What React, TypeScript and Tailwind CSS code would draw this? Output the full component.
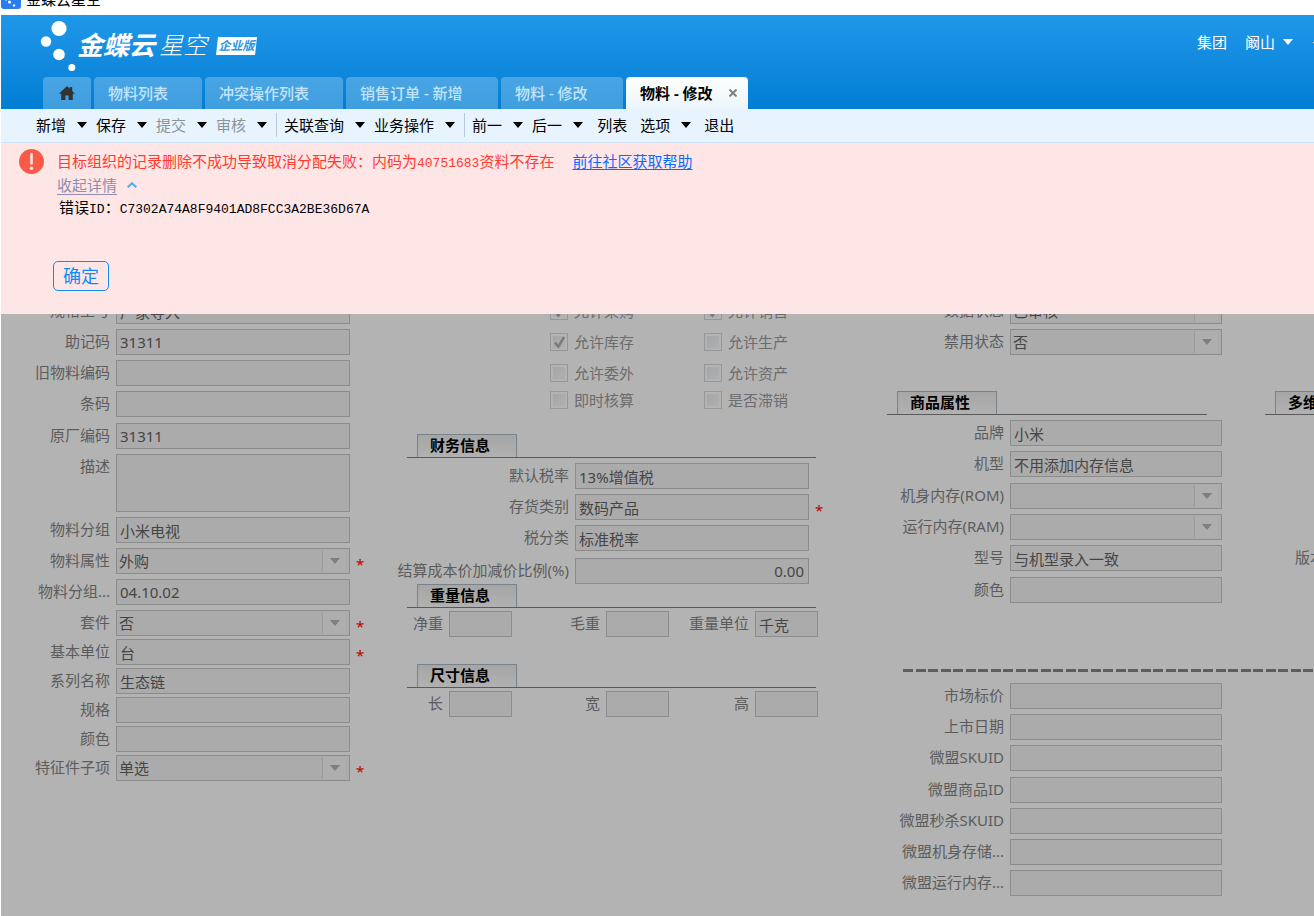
import { useId, type ReactNode } from 'react'
import clsx from 'clsx'

interface FieldData {
  label: string
  value?: string
  kind?: 'text' | 'select' | 'area'
  required?: boolean
  align?: 'right'
}

// Left column, split where the spacing between rows changes
const BASIC_GROUPS: FieldData[][] = [
  [
    { label: '规格型号', value: '厂家导入' },
    { label: '助记码', value: '31311' },
    { label: '旧物料编码' },
    { label: '条码' },
  ],
  [
    { label: '原厂编码', value: '31311' },
    { label: '描述', kind: 'area' },
    { label: '物料分组', value: '小米电视' },
    { label: '物料属性', value: '外购', kind: 'select', required: true },
    { label: '物料分组...', value: '04.10.02' },
    { label: '套件', value: '否', kind: 'select', required: true },
  ],
]

const UNIT_FIELDS: FieldData[] = [
  { label: '基本单位', value: '台', required: true },
  { label: '系列名称', value: '生态链' },
  { label: '规格' },
  { label: '颜色' },
  { label: '特征件子项', value: '单选', kind: 'select', required: true },
]

const TAX_FIELDS: FieldData[] = [
  { label: '默认税率', value: '13%增值税' },
  { label: '存货类别', value: '数码产品', required: true },
  { label: '税分类', value: '标准税率' },
]

const STATUS_FIELDS: FieldData[] = [
  { label: '数据状态', value: '已审核', kind: 'select' },
  { label: '禁用状态', value: '否', kind: 'select' },
]

const GOODS_GROUPS: FieldData[][] = [
  [
    { label: '品牌', value: '小米' },
    { label: '机型', value: '不用添加内存信息' },
  ],
  [
    { label: '机身内存(ROM)', kind: 'select' },
    { label: '运行内存(RAM)', kind: 'select' },
    { label: '型号', value: '与机型录入一致' },
  ],
  [{ label: '颜色' }],
]

const MARKET_GROUPS: FieldData[][] = [
  [{ label: '市场标价' }, { label: '上市日期' }, { label: '微盟SKUID' }],
  [
    { label: '微盟商品ID' },
    { label: '微盟秒杀SKUID' },
    { label: '微盟机身存储...' },
    { label: '微盟运行内存...' },
  ],
]

const TABS = [
  { title: '物料列表', width: 'w-[108px]' },
  { title: '冲突操作列表', width: 'w-[138px]' },
  { title: '销售订单 - 新增', width: 'w-[152px]' },
  { title: '物料 - 修改', width: 'w-[122px]' },
]

function Caret({ className }: { className?: string }) {
  return (
    <svg className={clsx('shrink-0 fill-current', className)} width="10" height="6" viewBox="0 0 10 6">
      <path d="M0 0h10L5 6z" />
    </svg>
  )
}

const CONTROL =
  'w-full border border-[#8c8c8c] bg-[#ababab] text-[15px] leading-[22px] text-[#454545] opacity-100'

function Field({ label, value = '', kind = 'text', required, align, labelWidth, width }: FieldData & {
  labelWidth: string
  width: string
}) {
  const id = useId()
  return (
    <div className="flex shrink-0">
      <label htmlFor={id} className={clsx('mr-1.5 shrink-0 whitespace-nowrap text-right leading-6 text-[#5c5c5c]', labelWidth)}>
        {label}
      </label>
      <div className={clsx('relative shrink-0', width)}>
        {kind === 'area' && (
          <textarea id={id} disabled defaultValue={value} className={clsx(CONTROL, 'block h-[58px] resize-none px-[3px]')} />
        )}
        {kind === 'text' && (
          <input
            id={id}
            disabled
            defaultValue={value}
            className={clsx(CONTROL, 'block h-[26px] px-[3px]', align === 'right' && 'pr-1 text-right')}
          />
        )}
        {kind === 'select' && (
          <>
            <select id={id} disabled defaultValue={value} className={clsx(CONTROL, 'block h-[26px] appearance-none px-0.5')}>
              <option value={value}>{value}</option>
            </select>
            <span className="pointer-events-none absolute top-0.5 right-1 flex h-[22px] w-6 items-center justify-center border-l border-[#9c9c9c] bg-[#aeaeae] text-[#7f7f7f]">
              <Caret />
            </span>
          </>
        )}
      </div>
      {required && <span className="ml-1.5 h-[26px] leading-8 text-[#bd0000]">*</span>}
    </div>
  )
}

function FieldList({ fields, labelWidth, width }: { fields: FieldData[]; labelWidth: string; width: string }) {
  return (
    <div className="flex flex-col gap-[5px]">
      {fields.map((f) => (
        <Field key={f.label} {...f} labelWidth={labelWidth} width={width} />
      ))}
    </div>
  )
}

function SectionTitle({ children, className }: { children: ReactNode; className?: string }) {
  return (
    <div className={clsx('border-b border-[#5a5a5a] pl-2.5', className)}>
      <h2 className="h-[23px] w-[100px] border border-b-0 border-[#78828b] bg-linear-to-b from-[#a6a6a6] to-[#b1b1b1] pl-3 text-[15px] leading-5 font-bold whitespace-nowrap text-black">
        {children}
      </h2>
    </div>
  )
}

function CheckItem({ label, checked }: { label: string; checked?: boolean }) {
  return (
    <label className="flex h-[18px] w-[154px] items-center gap-1.5 text-[#6c6c6c]">
      <span className="relative size-[18px]">
        <input
          type="checkbox"
          disabled
          defaultChecked={checked}
          className="block size-[18px] appearance-none border border-[#979797] bg-linear-to-br from-[#a2a5a8] to-[#b1b1b1] bg-clip-content p-0.5"
        />
        {checked && (
          <svg className="absolute top-0.5 left-1" width="12" height="14" viewBox="0 0 12 14">
            <path d="M1 7.5l3.4 4.2L10 2" fill="none" stroke="#7a7a7a" strokeWidth="2.4" />
          </svg>
        )}
      </span>
      {label}
    </label>
  )
}

function MenuItem({ label, disabled, menu = true }: { label: string; disabled?: boolean; menu?: boolean }) {
  return (
    <button type="button" className="flex items-center gap-[11px] whitespace-nowrap">
      <span className={clsx(disabled && 'text-[#8a929a]')}>{label}</span>
      {menu && <Caret />}
    </button>
  )
}

function Divider() {
  return <span className="-mr-0.5 h-6 w-px bg-[#b4c8de]" />
}

function Mono({ children }: { children: ReactNode }) {
  return <span className="font-['Liberation_Mono',monospace] text-[13px] leading-none">{children}</span>
}

function Header() {
  return (
    <header className="bg-linear-to-b from-[#1f97e9] to-[#007ed4] text-white">
      <div className="flex h-[62px] items-center">
        <svg className="ml-[38px] shrink-0" width="38" height="56" viewBox="39 18 38 56" fill="#fff">
          <circle cx="59" cy="28.5" r="7.6" />
          <circle cx="46" cy="41.5" r="5.2" />
          <circle cx="59" cy="54.5" r="5.8" />
          <circle cx="71.8" cy="67.6" r="3.5" />
        </svg>
        <div className="flex items-center pb-0.5">
          <span className="text-[26px] leading-8 font-bold italic">金蝶云</span>
          <span className="ml-1 text-[24px] leading-8 font-light italic">星空</span>
        </div>
        <span className="ml-[9px] h-[18px] w-[41px] bg-white text-center text-[12px] leading-[18px] font-bold text-[#2c95e2] italic [clip-path:polygon(2px_0,100%_0,39px_100%,0_100%)]">
          企业版
        </span>
        <div className="ml-auto flex items-center pb-2">
          <span>集团</span>
          <button type="button" className="ml-[18px] flex items-center gap-2">
            阚山
            <Caret />
          </button>
          <span className="ml-5 h-px w-px bg-white" />
        </div>
      </div>
      <nav className="flex h-8 gap-[3px] pl-[42px]">
        <button type="button" aria-label="首页" className="flex w-12 items-center justify-center rounded-t bg-white/25">
          <svg width="16" height="14" viewBox="0 0 16 14" fill="#333">
            <path d="M8 0l2.8 2.7V1h2.4v4L16 7.8h-2.2V14H9.6V9.4H6.4V14H2.2V7.8H0z" />
          </svg>
        </button>
        {TABS.map((tab) => (
          <button
            key={tab.title}
            type="button"
            className={clsx('rounded-t bg-white/25 pl-3.5 text-left font-medium text-[#c3e5fc]', tab.width)}
          >
            {tab.title}
          </button>
        ))}
        <button
          type="button"
          className="flex w-[122px] items-center gap-4 rounded-t bg-linear-to-b from-white to-[#eaf5fb] pl-3.5 font-bold whitespace-nowrap text-black"
        >
          物料 - 修改
          <svg width="8" height="8" viewBox="0 0 8 8" stroke="#808080" strokeWidth="2">
            <path d="M.5.5l7 7M7.5.5l-7 7" />
          </svg>
        </button>
      </nav>
    </header>
  )
}

function Toolbar() {
  return (
    <div className="flex h-[34px] items-center gap-[9px] border-b border-[#cfe3f8] bg-[#e7f4fd] pb-0.5 pl-[35px] text-black">
      <MenuItem label="新增" />
      <MenuItem label="保存" />
      <MenuItem label="提交" disabled />
      <MenuItem label="审核" disabled />
      <Divider />
      <MenuItem label="关联查询" />
      <MenuItem label="业务操作" />
      <Divider />
      <MenuItem label="前一" />
      <MenuItem label="后一" />
      <div className="ml-[5px] flex gap-[13px]">
        <MenuItem label="列表" menu={false} />
        <MenuItem label="选项" />
        <MenuItem label="退出" menu={false} />
      </div>
    </div>
  )
}

function ErrorPanel() {
  return (
    <section role="alert" className="flex bg-[#ffe6e6] pt-[7px] pb-[23px]">
      <svg className="-mt-px ml-[18px] shrink-0" width="25" height="25" viewBox="0 0 25 25">
        <circle cx="12.5" cy="12.5" r="12.5" fill="#fb5a48" />
        <path d="M12.5 5v9.5" stroke="#ffe6e6" strokeWidth="2.6" strokeLinecap="round" />
        <circle cx="12.5" cy="19.3" r="1.7" fill="#ffe6e6" />
      </svg>
      <div className="ml-2 flex flex-col items-start leading-[22px]">
        <p className="h-[23px] pl-[5px] text-[#ff3b30]">
          目标组织的记录删除不成功导致取消分配失败：内码为<Mono>40751683</Mono>资料不存在
          <a href="#" className="ml-[18px] text-[#0a6cff] underline underline-offset-2">前往社区获取帮助</a>
        </p>
        <button type="button" className="flex h-[23px] items-center gap-2.5 pl-[5px] text-[#8d8dad]">
          <span className="underline underline-offset-3">收起详情</span>
          <svg width="10" height="6" viewBox="0 0 10 6" fill="none" stroke="#55aaf0" strokeWidth="2">
            <path d="M.7 5.3L5 1.2l4.3 4.1" />
          </svg>
        </button>
        <p className="h-[23px] pl-[7px] text-black">
          错误<Mono>ID</Mono>：<Mono>C7302A74A8F9401AD8FCC3A2BE36D67A</Mono>
        </p>
        <button
          type="button"
          className="mt-[42px] ml-px h-[30px] w-14 rounded-[5px] border border-[#118cf5] text-[18px] leading-7 text-[#118cf5]"
        >
          确定
        </button>
      </div>
    </section>
  )
}

function BasicColumn() {
  return (
    <div className="flex w-[389px] shrink-0 flex-col">
      <div className="flex flex-col gap-1.5">
        {BASIC_GROUPS.map((group, i) => (
          <FieldList key={i} fields={group} labelWidth="w-[109px]" width="w-[234px]" />
        ))}
      </div>
      <div className="mt-[3px] flex flex-col gap-[3px]">
        {UNIT_FIELDS.map((f) => (
          <Field key={f.label} {...f} labelWidth="w-[109px]" width="w-[234px]" />
        ))}
      </div>
    </div>
  )
}

function FinanceColumn() {
  return (
    <div className="flex w-[497px] shrink-0 flex-col pt-1">
      <div className="flex flex-col gap-[13px] pl-40">
        <div className="flex">
          <CheckItem label="允许采购" checked />
          <CheckItem label="允许销售" checked />
        </div>
        <div className="flex">
          <CheckItem label="允许库存" checked />
          <CheckItem label="允许生产" />
        </div>
        <div className="flex">
          <CheckItem label="允许委外" />
          <CheckItem label="允许资产" />
        </div>
      </div>
      <div className="mt-[9px] flex pl-40">
        <CheckItem label="即时核算" />
        <CheckItem label="是否滞销" />
      </div>

      <SectionTitle className="mt-[25px] mb-[5px] ml-[17px] w-[409px]">财务信息</SectionTitle>
      <FieldList fields={TAX_FIELDS} labelWidth="w-[179px]" width="w-[234px]" />
      <div className="mt-[7px]">
        <Field label="结算成本价加减价比例(%)" value="0.00" align="right" labelWidth="w-[179px]" width="w-[234px]" />
      </div>

      <SectionTitle className="mb-[3px] ml-[17px] w-[409px]">重量信息</SectionTitle>
      <div className="flex">
        <Field label="净重" labelWidth="w-[53px]" width="w-[63px]" />
        <Field label="毛重" labelWidth="w-[88px]" width="w-[63px]" />
        <Field label="重量单位" value="千克" labelWidth="w-[80px]" width="w-[63px]" />
      </div>

      <SectionTitle className="mt-[27px] mb-[3px] ml-[17px] w-[409px]">尺寸信息</SectionTitle>
      <div className="flex">
        <Field label="长" labelWidth="w-[53px]" width="w-[63px]" />
        <Field label="宽" labelWidth="w-[88px]" width="w-[63px]" />
        <Field label="高" labelWidth="w-[80px]" width="w-[63px]" />
      </div>
    </div>
  )
}

function GoodsColumn() {
  return (
    <div className="min-w-0 flex-1 overflow-hidden">
      <div className="flex">
        <div className="w-[378px] shrink-0">
          <FieldList fields={STATUS_FIELDS} labelWidth="w-[117px]" width="w-[212px]" />
          <SectionTitle className="mt-9 mb-[5px] w-80">商品属性</SectionTitle>
          <div className="flex flex-col gap-1.5">
            {GOODS_GROUPS.map((group, i) => (
              <FieldList key={i} fields={group} labelWidth="w-[117px]" width="w-[212px]" />
            ))}
          </div>
        </div>
        <div className="w-80 shrink-0 pt-[93px]">
          <SectionTitle>多维属性</SectionTitle>
          <p className="mt-[130px] ml-[30px] leading-6 text-[#5c5c5c]">版本</p>
        </div>
      </div>
      <div className="mt-[66px] mb-[11px] ml-4 h-[3px] bg-[repeating-linear-gradient(90deg,#5e5e5e_0_10px,transparent_10px_13px,#5e5e5e_13px_23px,transparent_23px_25px)]" />
      <div className="flex flex-col gap-1.5">
        {MARKET_GROUPS.map((group, i) => (
          <FieldList key={i} fields={group} labelWidth="w-[117px]" width="w-[212px]" />
        ))}
      </div>
    </div>
  )
}

export default function App() {
  return (
    <div className="flex min-h-screen flex-col overflow-hidden bg-white pl-px font-['Noto_Sans','Noto_Sans_CJK_SC',sans-serif] text-[15px] leading-5">
      <div className="h-[15px] overflow-hidden">
        <div className="-mt-[11px] flex h-5 items-center gap-[5px] text-black">
          <svg width="20" height="20" viewBox="0 0 20 20">
            <rect width="20" height="20" rx="3" fill="#2a7df0" />
            <g fill="#fff">
              <circle cx="8" cy="7" r="2.4" />
              <circle cx="5" cy="10.5" r="1" />
              <circle cx="8.5" cy="13" r="1.6" />
              <circle cx="13" cy="16.5" r="1.2" />
            </g>
          </svg>
          金蝶云星空
        </div>
      </div>
      <Header />
      <Toolbar />
      <ErrorPanel />
      <main className="flex-1 overflow-hidden bg-[#b3b3b3]">
        {/* form is scrolled under the error panel */}
        <div className="-mt-4 flex pb-5">
          <BasicColumn />
          <FinanceColumn />
          <GoodsColumn />
        </div>
      </main>
    </div>
  )
}
